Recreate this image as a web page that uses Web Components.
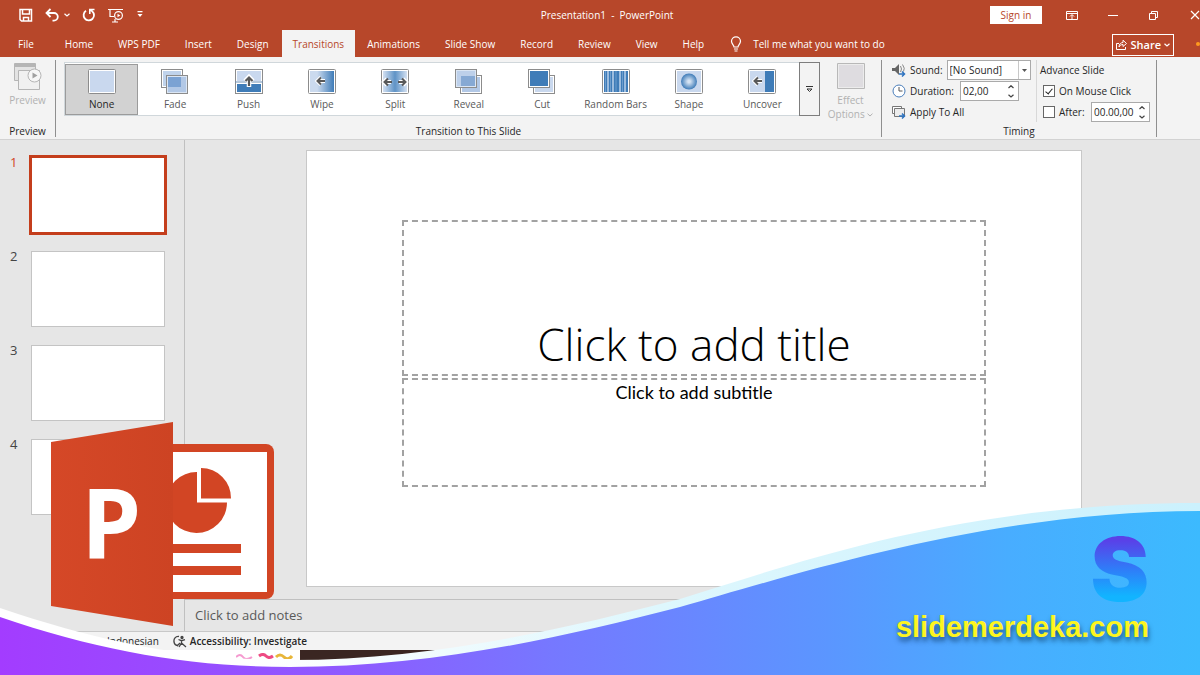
<!DOCTYPE html>
<html lang="en">
<head>
<meta charset="utf-8">
<meta name="viewport" content="width=device-width, initial-scale=1">
<title>Presentation1 - PowerPoint</title>
<style>
  html, body { margin: 0; }
  body { font: 10px/14px "Open Sans", "Noto Sans", sans-serif; color: #262626; background: #fff; }
</style>
</head>
<body>
<power-point></power-point>

<script>
const BASE = `<style>
  *, *::before, *::after { box-sizing: border-box; }
  button, input, select { font: inherit; color: inherit; margin: 0; padding: 0; border: 0; background: none; border-radius: 0; }
  svg { display: block; flex: none; }
</style>`;

function define(name, render) {
  customElements.define(name, class extends HTMLElement {
    constructor() {
      super();
      this.attachShadow({ mode: "open" });
    }
    connectedCallback() {
      this.shadowRoot.innerHTML = BASE + render(this);
    }
  });
}

/* ---------- title bar ---------- */
define("title-bar", () => `
<style>
  :host { display: grid; grid-template-columns: 1fr auto 1fr; align-items: center; height: 30px;
          padding-left: 14px; background: #b7472a; color: #fff; overflow: hidden; }
  .quick { display: flex; align-items: center; gap: 6px; padding-left: 2px; }
  .quick button { height: 20px; padding: 0 3px; }
  .quick .undo { display: flex; align-items: center; gap: 4px; }
  h1 { margin: 0; font: inherit; white-space: pre; }
  .window { display: flex; justify-content: flex-end; align-items: center; margin-right: -15px; }
  .sign { width: 52px; height: 18px; margin-right: 9px; background: #fff; color: #b7472a; }
  .window .sys { width: 41px; height: 26px; display: grid; place-items: center; }
</style>
<div class="quick">
  <button aria-label="Save"><svg width="14" height="14" fill="none" stroke="#fff" stroke-width="1.5"><path d="M1 1.5h11.5v11.500H2.500L1 11.500z"/><path d="M3.500 1.500v4.500h7V1.500M4.500 13V9.500h5V13"/></svg></button>
  <button aria-label="Undo" class="undo"><svg width="15" height="14" fill="none" stroke="#fff" stroke-width="1.8"><path d="M5.500 1L1.500 5l4 4M2 5h7a3.800 3.800 0 0 1 0 7.600H7.500"/></svg><svg width="6" height="4" fill="none" stroke="#fff" stroke-width="1.200"><path d="M.5 .7L3 3 5.500 .7"/></svg></button>
  <button aria-label="Repeat"><svg width="14" height="14" fill="none" stroke="#fff" stroke-width="1.800"><path d="M4 2.800A5.200 5.200 0 1 0 10.300 3.300L8 1.800"/><path d="M12.500 1.500H7.800V6" stroke-width="1.600"/></svg></button>
  <button aria-label="Start From Beginning"><svg width="16" height="15" fill="none" stroke="#fff" stroke-width="1.200"><path d="M0 1.500h15M2 1.500v7h4M4 14h6M7 11v3"/><circle cx="10.500" cy="7.500" r="3.900"/><path d="M9.500 5.700v3.600l2.800-1.800z" fill="#fff" stroke="none"/></svg></button>
  <button aria-label="Customize Quick Access Toolbar"><svg width="8" height="8" fill="#fff"><path d="M1.500 0h5v1.300h-5zM1.500 3h5L4 6z"/></svg></button>
</div>
<h1>Presentation1  -  PowerPoint</h1>
<div class="window">
  <button class="sign">Sign in</button>
  <button class="sys" aria-label="Ribbon Display Options"><svg width="12" height="9" fill="none" stroke="#fff"><path d="M.5.5h11v8H.5zM.5 2.500h11M6 8V4M4 5.500l2-2 2 2"/></svg></button>
  <button class="sys" aria-label="Minimize"><svg width="10" height="9" stroke="#fff"><path d="M0 4.500h10"/></svg></button>
  <button class="sys" aria-label="Restore Down"><svg width="9" height="9" fill="none" stroke="#fff"><path d="M.5 2.500h6v6h-6zM2.500 2.500v-2h6v6h-2"/></svg></button>
  <button class="sys" aria-label="Close"><svg width="10" height="10" stroke="#fff" stroke-width="1.200"><path d="M1 1l8 8M9 1l-8 8"/></svg></button>
</div>`);

/* ---------- ribbon tabs ---------- */
define("ribbon-tabs", () => {
  const tabs = ["Home", "WPS PDF", "Insert", "Design", "Transitions", "Animations", "Slide Show", "Record", "Review", "View", "Help"];
  return `
<style>
  :host { display: flex; align-items: stretch; height: 27px; background: #b7472a; color: #fff; }
  button { padding: 0 13px 0 12px; white-space: nowrap; }
  .file { padding: 0 19px 0 18px; }
  .on { padding: 0 11px; background: #f3f3f3; color: #b7472a; }
  .tell { display: flex; align-items: center; gap: 11px; padding-left: 13px; }
  .share { display: flex; align-items: center; gap: 3px; align-self: center; margin: 2px 22px 0 auto; height: 22px; padding: 0 3px;
           border: 1px solid #fff; font-size: 11px; font-weight: 600; }
  .dot { align-self: center; width: 4px; height: 4px; border-radius: 50%; background: #ff9a1f; }
</style>
<button class="file">File</button>
${tabs.map(t => `<button class="${t === "Transitions" ? "on" : ""}">${t}</button>`).join("")}
<button class="tell"><svg width="12" height="16" fill="none" stroke="#fff" stroke-width="1.200"><path d="M4 11C4 9 1.500 8 1.500 5.300a4.500 4.500 0 0 1 9 0C10.500 8 8 9 8 11zM4 13h4M4.500 15h3"/></svg>Tell me what you want to do</button>
<button class="share"><svg width="11" height="11" fill="none" stroke="#fff"><path d="M3 4.500H.5v6h9V8M3 8c0-3 2-4.500 4-4.500V1.200l3.500 3.300L7 7.500V5.500C5 5.500 4 6.500 3 8z"/></svg>Share<svg width="6" height="4" fill="none" stroke="#fff" stroke-width="1.200"><path d="M.5.7L3 3 5.500.7"/></svg></button>
<span class="dot"></span>`;
});

/* ---------- ribbon ---------- */
define("ribbon-group", el => `
<style>
  :host { display: flex; flex-direction: column; justify-content: space-between; border-right: 1px solid #8f8f8f; }
  footer { text-align: center; color: #262626; line-height: 12px; }
</style>
<div><slot></slot></div>
<footer>${el.getAttribute("label") || "&nbsp;"}</footer>`);

const ARROW_L = `<path d="M19 13h-7M15 9.500L11.500 13l3.500 3.500" fill="none" stroke="#fff" stroke-width="4"/><path d="M19 13h-7M15 9.500L11.500 13l3.500 3.500" fill="none" stroke="#595959" stroke-width="2"/>`;
const FRAME = fill => `<rect x=".5" y=".5" width="27" height="24" rx="1" fill="#fff" stroke="#8c8c8c"/><rect x="2" y="2" width="24" height="21" fill="${fill}"/>`;
const ART = {
  None: FRAME("#c9d8ee"),
  Fade: `<rect x=".5" y=".5" width="21" height="18" fill="#fff" stroke="#8c8c8c"/><rect x="2" y="2" width="18" height="15" fill="#c0d3eb"/><rect x="5.500" y="6.500" width="21" height="18" fill="#dbe6f4" stroke="#8c8c8c"/><rect x="7" y="8" width="18" height="15" fill="#b2c8e6"/><rect x="7" y="8" width="13" height="10" fill="#7ba2d3"/>`,
  Push: `<rect x=".5" y=".5" width="27" height="24" fill="#fff" stroke="#8c8c8c"/><path d="M2 2h24v10H2z" fill="#c9d8ee"/><path d="M2 15h24v8H2z" fill="#3f7cb8"/><path d="M0 13h28" stroke="#6c8fb5"/><path d="M14 18v-9M10 12l4-4 4 4" fill="none" stroke="#fff" stroke-width="4.500"/><path d="M14 17v-8M10.500 12L14 8.500l3.500 3.500" fill="none" stroke="#595959" stroke-width="2.200"/>`,
  Wipe: `<defs><linearGradient id="g"><stop offset=".3" stop-color="#cbdaee"/><stop offset="1" stop-color="#3f7cb8"/></linearGradient></defs>${FRAME("url(#g)")}<g transform="translate(-2 -1)">${ARROW_L}</g>`,
  Split: `<defs><linearGradient id="g"><stop stop-color="#d3e0f1"/><stop offset=".5" stop-color="#5f93c6"/><stop offset="1" stop-color="#d3e0f1"/></linearGradient></defs>${FRAME("url(#g)")}<path d="M10 13H3M6 10l-3 3 3 3M18 13h7M22 10l3 3-3 3" fill="none" stroke="#fff" stroke-width="4"/><path d="M11 13H4M7 9.500L3.500 13 7 16.500M17 13h7M21 9.500l3.500 3.500-3.500 3.500" fill="none" stroke="#595959" stroke-width="2"/>`,
  Reveal: `<rect x="5.500" y="6.500" width="21" height="18" fill="#fff" stroke="#8c8c8c"/><rect x="7" y="8" width="18" height="15" fill="#b2c8e6"/><rect x=".5" y=".5" width="21" height="18" fill="#dbe6f4" stroke="#8c8c8c"/><rect x="2" y="2" width="18" height="15" fill="#bdd0ea"/><rect x="6" y="7" width="14" height="10" fill="#86a9d4"/>`,
  Cut: `<rect x="5.500" y="6.500" width="21" height="18" fill="#fff" stroke="#8c8c8c"/><rect x="7" y="8" width="18" height="15" fill="#c9d8ee"/><rect x=".5" y=".5" width="21" height="18" fill="#fff" stroke="#8c8c8c"/><rect x="2" y="2" width="18" height="15" fill="#3f7cb8"/>`,
  "Random Bars": `${FRAME("#3f7cb8")}<path d="M6 2v21M11 2v21M18 2v21M23 2v21" stroke="#bcd1ea" stroke-width="1.500"/><path d="M3.500 2v21M8.500 2v21M14 2v21M20.500 2v21" stroke="#6d9dcd"/>`,
  Shape: `<defs><radialGradient id="g"><stop offset=".15" stop-color="#d5e3f3"/><stop offset="1" stop-color="#3f7cb8"/></radialGradient></defs>${FRAME("#c9d8ee")}<circle cx="14" cy="12.500" r="8" fill="url(#g)"/>`,
  Uncover: `${FRAME("#c9d8ee")}<path d="M17 2h9v21h-9z" fill="#3f7cb8"/><g transform="translate(-5 -1)">${ARROW_L}</g>`
};

define("transition-item", el => `
<style>
  :host { display: block; flex: 1 1 0; min-width: 0; }
  button { display: flex; flex-direction: column; align-items: center; gap: 2px; width: 100%; height: 51px; padding-top: 4px;
           color: #595959; white-space: nowrap; border: 1px solid transparent; }
  :host([selected]) button { background: #d2d2d2; border-color: #9b9b9b; color: #262626; }
</style>
<button><svg width="28" height="26">${ART[el.getAttribute("name")]}</svg>${el.getAttribute("name")}</button>`);

define("transition-gallery", () => `
<style>
  :host { display: flex; margin: 0 0 0 8px; height: 54px; background: #fff; border: 1px solid #d0d7db; border-right: 0; }
  .items { display: flex; flex: 1; padding-top: 1px; }
  .more { width: 21px; margin: -1px 0; border: 1px solid #7d7d7d; background: #f3f3f3; display: grid; place-items: center; }
</style>
<div class="items">${Object.keys(ART).map((n, i) => `<transition-item name="${n}" ${i ? "" : "selected"}></transition-item>`).join("")}</div>
<button class="more" aria-label="More transitions"><svg width="7" height="7" fill="none" stroke="#333"><path d="M0 .5h7M1 3l2.500 2.500L6 3z"/></svg></button>`);

define("spin-field", el => `
<style>
  :host { display: flex; width: 59px; height: 20px; background: #fff; border: 1px solid #aaa; align-items: center; }
  input { flex: 1; min-width: 0; width: 10px; padding-left: 2px; }
  div { display: flex; flex-direction: column; gap: 5px; padding: 0 4px; }
  button { display: block; }
</style>
<input value="${el.getAttribute("value")}" aria-label="${el.getAttribute("label")}">
<div><button aria-label="Increase"><svg width="6" height="4" fill="none" stroke="#444" stroke-width="1.200"><path d="M.5 3L3 .7 5.500 3"/></svg></button>
<button aria-label="Decrease"><svg width="6" height="4" fill="none" stroke="#444" stroke-width="1.200"><path d="M.5.7L3 3 5.500.7"/></svg></button></div>`);

define("timing-panel", () => `
<style>
  :host { display: grid; grid-template-columns: 144px 1fr; margin-left: 10px; }
  .col { display: flex; flex-direction: column; gap: 1px; }
  .row { display: flex; align-items: center; gap: 4px; height: 20px; white-space: nowrap; }
  .adv { padding-left: 3px; border-left: 1px solid #d8d8d8; }
  .adv .check { padding-left: 3px; }
  .pick { display: flex; margin-left: auto; width: 85px; height: 20px; border: 1px solid #aaa; background: #fff; }
  .sound { padding-right: 5px; }
  .dur { padding-right: 17px; }
  .dur spin-field, .check spin-field { margin-left: auto; }
  .check spin-field { margin-right: 6px; }
  select { appearance: none; flex: 1; padding-left: 2px; }
  .pick span { width: 12px; border-left: 1px solid #c8c8c8; display: grid; place-items: center; pointer-events: none; }
  input[type=checkbox] { appearance: none; width: 12px; height: 12px; border: 1px solid #666; background: #fff; display: grid; place-items: center; }
  input:checked::before { content: ""; width: 4px; height: 7px; margin-bottom: 2px; border: solid #222; border-width: 0 1px 1px 0; rotate: 40deg; }
</style>
<div class="col">
  <div class="row sound"><svg width="14" height="13"><path d="M0 4h3l4-4v11L3 7H0z" fill="#666"/><path d="M8.500 2q2 3 0 6M10.500.5q3 4 1 7" fill="none" stroke="#888"/><path d="M7 10h5M10 7.500l2.500 2.500-2.500 2.500" fill="none" stroke="#2f74c0" stroke-width="1.500"/></svg>
    <label for="s">Sound:</label><div class="pick"><select id="s"><option>[No Sound]</option></select><span><svg width="5" height="3"><path d="M0 0h5L2.500 3z" fill="#555"/></svg></span></div></div>
  <div class="row dur"><svg width="14" height="14" fill="#fff" stroke="#4a7ebb"><circle cx="7" cy="7" r="6"/><path d="M7 3v4h3.500" fill="none" stroke="#555"/></svg>Duration:<spin-field value="02,00" label="Duration"></spin-field></div>
  <div class="row"><svg width="14" height="13" fill="#fff" stroke="#777"><path d="M.5.5h9v7h-9z"/><path d="M2.500 2.500h10v8h-10z" fill="#ececec"/><path d="M7 10h5M10 7.500l2.500 2.500-2.500 2.500" fill="none" stroke="#2f74c0" stroke-width="1.500"/></svg><button>Apply To All</button></div>
</div>
<div class="col adv">
  <div class="row">Advance Slide</div>
  <div class="row check"><input type="checkbox" id="m" checked><label for="m">On Mouse Click</label></div>
  <div class="row check"><input type="checkbox" id="a"><label for="a">After:</label><spin-field value="00.00,00" label="Advance after"></spin-field></div>
</div>`);

define("ribbon-bar", () => `
<style>
  :host { display: grid; grid-template-columns: 56px 1fr 275px 43px; height: 83px; padding: 3px 0 2px; background: #f3f3f3; border-bottom: 1px solid #d2d2d2; }
  .off { display: flex; flex-direction: column; align-items: center; gap: 1px; width: 100%; padding-top: 3px; color: #b1b1b1; line-height: 14px; }
  .mid { display: grid; grid-template-columns: 1fr 61px; padding-top: 2px; }
  .mid .off { gap: 4px; padding-top: 1px; }
</style>
<ribbon-group label="Preview"><button class="off"><svg width="30" height="29" fill="#e3e3e3" stroke="#b5b5b5"><path d="M1.500.5h21v17h-21z"/><path d="M2 2.500h20" stroke-width="3"/><path d="M5.500 7.500h21v19h-21z" fill="#f0f0f0"/><circle cx="21.500" cy="12.500" r="6.500" fill="#f6f6f6"/><path d="M19.500 9.500v6l5-3z" fill="#a0a0a0" stroke="none"/></svg>Preview</button></ribbon-group>
<ribbon-group label="Transition to This Slide"><div class="mid"><transition-gallery></transition-gallery>
  <button class="off"><svg width="28" height="26"><path d="M.5.5h27v25H.5z" fill="#ececec" stroke="#b8b8b8"/><path d="M2 2h24v22H2z" fill="#dedce0"/></svg><span>Effect<br>Options <svg width="6" height="4" fill="none" stroke="#b1b1b1" style="display:inline;vertical-align:middle"><path d="M.5.7L3 3 5.500.7"/></svg></span></button></div></ribbon-group>
<ribbon-group label="Timing"><timing-panel></timing-panel></ribbon-group>`);

/* ---------- workspace ---------- */
define("slide-thumb", el => `
<style>
  :host { display: grid; grid-template-columns: 21px 1fr; font-size: 13px; line-height: 10px; color: #444; }
  button { height: 76px; background: #fff; border: 1px solid #c4c4c4; }
  :host([selected]) { color: #d24726; }
  :host([selected]) button { border: 0; outline: 3px solid #c43e1c; outline-offset: -1px; }
</style>
<span>${el.getAttribute("number")}</span><button aria-label="Slide ${el.getAttribute("number")}"></button>`);

define("slide-list", () => `
<style>
  :host { display: flex; flex-direction: column; gap: 18px; padding: 17px 19px 0 10px; border-right: 1px solid #c0c0c0; background: #e6e6e6; }
</style>
${[1, 2, 3, 4].map(n => `<slide-thumb number="${n}" ${n === 1 ? "selected" : ""}></slide-thumb>`).join("")}`);

define("slide-canvas", () => `
<style>
  :host { display: block; padding: 10px 118px 12px 121px; }
  .slide { display: grid; grid-template-rows: 156fr 109fr; gap: 2px; aspect-ratio: 776 / 437;
           padding: 69px 95px 99px; background: #fff; border: 1px solid #c8c8c8; }
  .ph { display: flex; justify-content: center; border: 2px dashed #a2a2a2; color: #000; margin: 0; text-align: center; }
  h2 { align-items: flex-end; font: 300 44px/60px "Open Sans", sans-serif; }
  p { font: 18px/24px Lato, "Open Sans", sans-serif; }
</style>
<div class="slide"><h2 class="ph">Click to add title</h2><p class="ph">Click to add subtitle</p></div>`);

define("slide-editor", () => `
<style>
  :host { display: flex; flex-direction: column; background: #e6e6e6; min-width: 0; }
  .notes { flex: 1; border-top: 1px solid #c0c0c0; padding: 0 10px; font-size: 13px; line-height: 30px; color: #595959; }
</style>
<slide-canvas></slide-canvas><div class="notes">Click to add notes</div>`);

define("status-bar", () => `
<style>
  :host { display: flex; align-items: center; height: 19px; padding-left: 84px; background: #f3f3f3; border-top: 1px solid #c8c8c8; }
  .lang { margin-left: 14px; }
  .acc { display: flex; align-items: center; gap: 3px; margin-left: 14px; font-weight: 600; }
</style>
<svg width="9" height="10" fill="none" stroke="#444"><path d="M.5.5h8v8h-8zM4.500.5v8"/></svg>
<button class="lang">Indonesian</button>
<button class="acc"><svg width="14" height="13" fill="none" stroke="#444" stroke-width="1.300"><path d="M6 1.500C2.500 1 .5 4 1 7c.4 2 2 3.500 4 3.500"/><path d="M5.500 4.500l3 1.200 3.500-1M8.500 5.700V8L6 12M8.500 8l4.500 4M7 8l-3 3"/><circle cx="9" cy="2.500" r="1" fill="#444"/></svg>Accessibility: Investigate</button>`);

/* ---------- overlays ---------- */
define("app-logo", () => `
<style>
  :host { display: block; width: 224px; height: 205px; }
  svg { width: 100%; height: 100%; }
  text { font: 700 96px "Open Sans", sans-serif; fill: #fff; }
</style>
<svg viewBox="0 0 224 205" role="img" aria-label="PowerPoint">
  <defs><linearGradient id="p"><stop stop-color="#d54827"/><stop offset="1" stop-color="#cd4323"/></linearGradient></defs>
  <path d="M110 22h105a8 8 0 0 1 8 8v139a8 8 0 0 1-8 8H110z" fill="#d24524"/>
  <path d="M110 30h106v140H110z" fill="#fff"/>
  <g fill="#d24524"><path d="M146 50a30.500 30.500 0 1 0 30 30.500h-30z"/><path d="M150 46a30 30 0 0 1 30 30.500h-30z"/><path d="M110 122h80v9h-80zM110 144h80v9h-80z"/></g>
  <path d="M0 20L122 0v204L0 184z" fill="url(#p)"/>
  <text x="30" y="137">P</text>
</svg>`);

define("brand-wave", () => `
<style>
  :host { display: block; height: 175px; }
  .wave { width: 100%; height: 100%; }
  .brand { position: absolute; right: 51px; bottom: 28px; display: flex; flex-direction: column; align-items: flex-end; }
  .mark { font: 900 88px/76px Inter, sans-serif; background: linear-gradient(#5a40e8 12%, #2f7cf8 50%, #12b4ff 86%); background-clip: text; color: transparent; }
  a { font: 700 29px/40px "Liberation Sans", Arial, sans-serif; color: #fdf51f; text-decoration: none; text-shadow: 1px 4px 5px rgba(10,50,90,.7); }
</style>
<svg class="wave" viewBox="0 500 1200 175" preserveAspectRatio="none">
  <defs>
    <linearGradient id="band"><stop offset=".2" stop-color="#fff"/><stop offset=".55" stop-color="#def7fd"/><stop offset="1" stop-color="#cbf1fd"/></linearGradient>
    <linearGradient id="fill"><stop stop-color="#a33cff"/><stop offset=".29" stop-color="#8e5aff"/><stop offset=".46" stop-color="#7678ff"/><stop offset=".69" stop-color="#5b96ff"/><stop offset=".84" stop-color="#48adff"/><stop offset="1" stop-color="#3cbafe"/></linearGradient>
  </defs>
  <path d="M0 608C100 642 190 660 290 660C430 660 560 630 680 599C800 562 960 503 1200 503V675H0z" fill="url(#band)"/>
  <path d="M0 617C100 651 190 667 290 667C430 667 560 638 680 607C800 573 990 511 1200 511V675H0z" fill="url(#fill)"/>
</svg>
<div class="brand"><span class="mark">S</span><a href="#">slidemerdeka.com</a></div>`);

define("power-point", () => `
<style>
  :host { display: flex; flex-direction: column; min-height: 100vh; position: relative; overflow: hidden; }
  main { display: grid; grid-template-columns: 185px 1fr; flex: 1; }
  .desk { display: flex; justify-content: flex-end; height: 25px; background: #fff; }
  .desk i { width: 75%; background: #3a2622; }
  .desk svg { margin: 3px 6px 0 0; }
  app-logo { position: absolute; left: 51px; bottom: 48px; }
  brand-wave { position: absolute; left: 0; right: 0; bottom: 0; }
</style>
<title-bar></title-bar>
<ribbon-tabs></ribbon-tabs>
<ribbon-bar></ribbon-bar>
<main><slide-list></slide-list><slide-editor></slide-editor></main>
<status-bar></status-bar>
<div class="desk"><svg width="58" height="6"><path d="M0 4q4-4 7 0t9 0" fill="none" stroke="#f59ad0" stroke-width="2"/><path d="M23 3q4-3 7 0t7 0" fill="none" stroke="#ee4b83" stroke-width="3"/><path d="M40 4q4-4 8 0t8-1" fill="none" stroke="#e8b63a" stroke-width="3"/></svg><i></i></div>
<brand-wave></brand-wave>
<app-logo></app-logo>`);
</script>
</body>
</html>
